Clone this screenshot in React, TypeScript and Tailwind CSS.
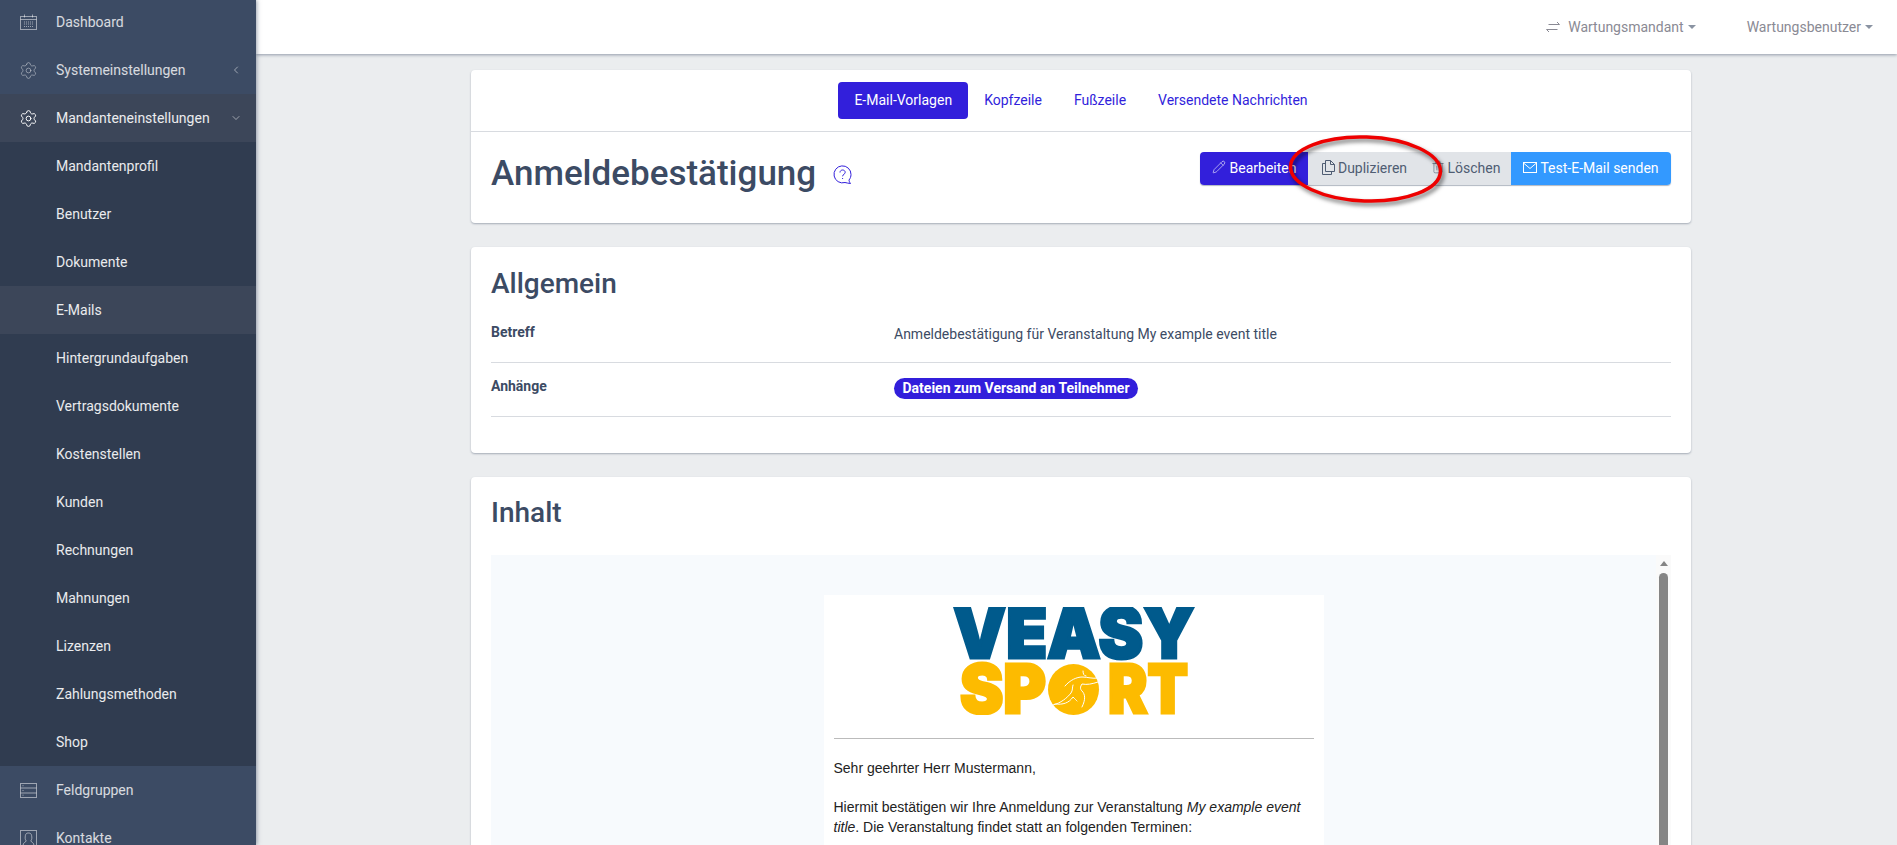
import { ChevronDown, ChevronLeft, Pencil, Settings, Trash2 } from 'lucide-react';

const subItems = [
  'Mandantenprofil',
  'Benutzer',
  'Dokumente',
  'E-Mails',
  'Hintergrundaufgaben',
  'Vertragsdokumente',
  'Kostenstellen',
  'Kunden',
  'Rechnungen',
  'Mahnungen',
  'Lizenzen',
  'Zahlungsmethoden',
  'Shop',
];

function CalendarIcon() {
  return (
    <svg width="17" height="16" viewBox="0 0 17 16" fill="none" stroke="currentColor" strokeWidth="1">
      <rect x="0.5" y="2.5" width="16" height="13" />
      <path d="M0.5 5.5h16M4.5 0.5v3M12.5 0.5v3" />
      <path d="M4 8h9M4 10h9M4 12.5h9" strokeDasharray="1 1" />
    </svg>
  );
}

function RowsIcon() {
  return (
    <svg width="17" height="15" viewBox="0 0 17 15" fill="none" stroke="currentColor" strokeWidth="1">
      <rect x="0.5" y="0.5" width="16" height="14" />
      <path d="M0.5 5h16M0.5 10h16M2.5 2.7h1M2.5 7.5h1M2.5 12.2h1" />
    </svg>
  );
}

function ContactIcon() {
  return (
    <svg width="17" height="16" viewBox="0 0 17 16" fill="none" stroke="currentColor" strokeWidth="1">
      <rect x="0.5" y="0.5" width="16" height="15" />
      <path d="M3 15.5c0-3 2.8-3.2 3.2-4.600C5 9.500 5 7.500 5.400 5.500 5.800 3.500 7 3 8.500 3s2.700.5 3.100 2.500c.4 2 .4 4-.8 5.400.4 1.400 3.200 1.600 3.200 4.600" />
    </svg>
  );
}

function SwapIcon() {
  return (
    <svg width="14" height="12" viewBox="0 0 14 12" fill="none" stroke="currentColor" strokeWidth="1">
      <path d="M0.5 8.500h11M0.5 8.500l2.500 2.500M13.500 3.500h-11M13.500 3.500L11 1" />
    </svg>
  );
}

function CopyIcon() {
  return (
    <svg width="13" height="15" viewBox="0 0 13 15" fill="none" stroke="currentColor" strokeWidth="1" className="-mt-[3px]">
      <path d="M3.500 0.500h5l4 4v7h-9zM8.500 0.500v4h4M3.500 3.500h-3v11h9v-3" />
    </svg>
  );
}

function MailIcon() {
  return (
    <svg width="14" height="11" viewBox="0 0 14 11" fill="none" stroke="currentColor" strokeWidth="1" className="-mt-[3px]">
      <rect x="0.5" y="0.5" width="13" height="10" />
      <path d="M0.5 1l6.500 5.500L13.500 1" />
    </svg>
  );
}

function HelpBubbleIcon() {
  return (
    <svg width="20" height="19" viewBox="0 0 20 19" fill="none" stroke="#321fdb" strokeWidth="1">
      <path d="M18 9.500a8.500 8.500 0 1 0-6 8c1.500.2 3.500 1 5.500 1-.8-1-1.500-2.500-1.500-3.500 1.300-1.500 2-3.500 2-5.500z" />
      <path d="M7 7.500c0-1.500 1.200-2.500 2.600-2.500s2.600 1 2.600 2.300c0 2-2.600 2-2.600 4M9.600 13v1" />
    </svg>
  );
}

function VeasyLogo() {
  return (
    <svg width="244" height="108" viewBox="0 0 244 108" className="mx-auto block">
      <g fontFamily="Inter, 'Liberation Sans', sans-serif" fontWeight="900" fontSize="70">
        <text x="1" y="51" textLength="242" lengthAdjust="spacingAndGlyphs" fill="#005a8c" stroke="#005a8c" strokeWidth="3">
          VEASY
        </text>
        <text x="8" y="106" fontSize="68" textLength="86" lengthAdjust="spacingAndGlyphs" fill="#fdbb00" stroke="#fdbb00" strokeWidth="3">
          SP
        </text>
        <text x="156" y="106" fontSize="68" textLength="80" lengthAdjust="spacingAndGlyphs" fill="#fdbb00" stroke="#fdbb00" strokeWidth="3">
          RT
        </text>
      </g>
      <circle cx="121.500" cy="82.500" r="25.500" fill="#fdbb00" />
      <g fill="none" stroke="#fff" strokeWidth="1" strokeLinecap="round">
        <path d="M131 64c0 3 1 5 3 5" />
        <path d="M113 79c5-6 12-9 17-9 6 0 10 2 16 1" />
        <path d="M146 75c-6 2-11 3-16 2-2 3-2 5 0 7 3 3 4 8 0 16" />
        <path d="M101 98c8-2 14-7 18-12 2-3 1-5 2-8" />
        <path d="M103 97c8 1 14-1 18-7 2 2 3 3 4 4" />
      </g>
    </svg>
  );
}

function SidebarRow({
  icon,
  label,
  chevron,
  className,
}: {
  icon?: React.ReactNode;
  label: string;
  chevron?: React.ReactNode;
  className: string;
}) {
  return (
    <div className={`flex h-[48px] shrink-0 items-center ${className}`}>
      <span className="flex w-[56px] justify-start pl-[20px]">{icon}</span>
      <span className="flex-1">{label}</span>
      {chevron && <span className="mr-[14px]">{chevron}</span>}
    </div>
  );
}

function Sidebar() {
  return (
    <aside className="z-10 flex h-[845px] w-[256px] shrink-0 flex-col overflow-hidden bg-[#3c4b64] text-[14px] shadow-[1px_0_4px_rgba(60,75,100,0.5)]">
      <div className="-mt-[2px] flex flex-col">
        <SidebarRow className="text-white/80" icon={<span className="text-white/50"><CalendarIcon /></span>} label="Dashboard" />
        <SidebarRow
          className="text-white/80"
          icon={<Settings size={19} strokeWidth={1} className="-ml-[1px] text-white/50" />}
          label="Systemeinstellungen"
          chevron={<ChevronLeft size={12} strokeWidth={2} className="text-white/50" />}
        />
        <SidebarRow
          className="bg-[#3c4659] text-white/90"
          icon={<Settings size={19} strokeWidth={1.200} className="-ml-[1px] text-white" />}
          label="Mandanteneinstellungen"
          chevron={<ChevronDown size={12} strokeWidth={2} className="text-white/50" />}
        />
        <div className="flex flex-col bg-[#303c50] text-white/90">
          {subItems.map((item) => (
            <SidebarRow key={item} className={item === 'E-Mails' ? 'bg-[#3c4659]' : ''} label={item} />
          ))}
        </div>
        <SidebarRow className="text-white/80" icon={<span className="text-white/50"><RowsIcon /></span>} label="Feldgruppen" />
        <SidebarRow className="text-white/80" icon={<span className="text-white/50"><ContactIcon /></span>} label="Kontakte" />
      </div>
    </aside>
  );
}

function Caret() {
  return <span className="ml-[4px] inline-block border-x-[4px] border-t-[4px] border-x-transparent border-t-[#8a93a2] align-[2px]" />;
}

function TopBar() {
  return (
    <header className="flex h-[54px] shrink-0 items-center justify-end bg-white pr-[24px] text-[14px] text-[#8a8a94] shadow-[0_1px_3px_rgba(60,75,100,0.5)]">
      <span className="flex items-center">
        <SwapIcon />
        <span className="ml-[8px]">Wartungsmandant</span>
        <Caret />
      </span>
      <span className="ml-[51px] flex items-center">
        Wartungsbenutzer
        <Caret />
      </span>
    </header>
  );
}

function DetailRow({ label, children }: { label: string; children: React.ReactNode }) {
  return (
    <div className="grid h-[54px] grid-cols-[403px_1fr] border-b border-[#d8dbe0] pt-[13px] text-[14px]">
      <div className="font-bold">{label}</div>
      <div className="pt-[2px]">{children}</div>
    </div>
  );
}

function Card({ children, className }: { children: React.ReactNode; className?: string }) {
  return <section className={`rounded-[4px] bg-white shadow-[0_1px_2px_rgba(60,75,100,0.4)] ${className ?? ''}`}>{children}</section>;
}

export default function App() {
  return (
    <div className="relative flex h-[845px] overflow-hidden bg-[#ebedef] font-['Roboto',sans-serif] text-[#3c4b64]">
      <Sidebar />
      <div className="flex min-w-0 flex-1 flex-col">
        <TopBar />
        <main className="flex w-[1435px] flex-col gap-[24px] pl-[215px] pt-[16px]">
          <Card>
            <nav className="flex h-[62px] items-center justify-center border-b border-[#d8dbe0] text-[14px] text-[#321fdb]">
              <a className="flex h-[37px] items-center rounded-[4px] bg-[#321fdb] px-[16px] text-white">E-Mail-Vorlagen</a>
              <a className="flex h-[37px] items-center px-[16px]">Kopfzeile</a>
              <a className="flex h-[37px] items-center px-[16px]">Fußzeile</a>
              <a className="flex h-[37px] items-center px-[16px]">Versendete Nachrichten</a>
            </nav>
            <div className="flex h-[91px] items-center justify-between px-[20px]">
              <div className="-mt-[8px] flex items-center">
                <h1 className="text-[35px] font-medium leading-none">Anmeldebestätigung</h1>
                <span className="ml-[17px] mt-[2px]"><HelpBubbleIcon /></span>
              </div>
              <div className="-mt-[18px] flex h-[33px] items-stretch rounded-[4px] text-[14px] shadow-[0_1px_1px_rgba(60,75,100,0.4)]">
                <button className="flex w-[108px] items-center justify-center gap-[4px] rounded-l-[4px] bg-[#321fdb] text-white">
                  <Pencil size={14} strokeWidth={1} className="-mt-[3px]" />
                  Bearbeiten
                </button>
                <button className="flex w-[115px] items-center justify-center gap-[3px] pr-[2px] bg-[#e1e4e8] text-[#4f5d73]">
                  <CopyIcon />
                  Duplizieren
                </button>
                <button className="flex w-[88px] items-center justify-center gap-[3px] pr-[3px] bg-[#e1e4e8] text-[#4f5d73]">
                  <Trash2 size={14} strokeWidth={1} className="-mt-[3px]" />
                  Löschen
                </button>
                <button className="flex w-[160px] items-center justify-center gap-[3px] rounded-r-[4px] bg-[#3399ff] text-white">
                  <MailIcon />
                  Test-E-Mail senden
                </button>
              </div>
            </div>
          </Card>

          <Card className="h-[206px] px-[20px] pt-[21px]">
            <h2 className="text-[28px] font-medium leading-[32px]">Allgemein</h2>
            <div className="mt-[9px] flex flex-col">
              <DetailRow label="Betreff">Anmeldebestätigung für Veranstaltung My example event title</DetailRow>
              <DetailRow label="Anhänge">
                <span className="inline-block h-[21px] rounded-full bg-[#321fdb] px-[8.500px] text-[14px] font-bold leading-[21px] text-white">
                  Dateien zum Versand an Teilnehmer
                </span>
              </DetailRow>
            </div>
          </Card>

          <Card className="h-[600px] px-[20px] pt-[20px]">
            <h2 className="text-[28px] font-medium leading-[32px]">Inhalt</h2>
            <div className="relative mt-[26px] flex h-[500px] justify-center bg-[#f7fafd] pr-[15px] pt-[40px]">
              <div className="w-[500px] bg-white px-[10px] pt-[12px] font-['Liberation_Sans',Arial,sans-serif] text-[14px] leading-[20px] text-[#222222]">
                <VeasyLogo />
                <hr className="mt-[23px] border-[#bbbbbb]" />
                <p className="mt-[19px]">Sehr geehrter Herr Mustermann,</p>
                <p className="mt-[19px]">
                  Hiermit bestätigen wir Ihre Anmeldung zur Veranstaltung <em>My example event title</em>. Die Veranstaltung findet statt an folgenden Terminen:
                </p>
              </div>
              <div className="absolute right-0 top-0 flex h-full w-[15px] flex-col items-center bg-[#fafafa] pt-[6px]">
                <span className="border-x-[4px] border-b-[5px] border-x-transparent border-b-[#858585]" />
                <span className="mt-[7px] h-full w-[9px] rounded-t-full bg-[#858585]" />
              </div>
            </div>
          </Card>
        </main>
      </div>
      {/* Red annotation ring drawn over the button group */}
      <svg className="absolute left-[1285px] top-[130px] drop-shadow-[2px_3px_2px_rgba(0,0,0,0.55)]" width="164" height="78" viewBox="0 0 164 78" fill="none">
        <ellipse cx="80.500" cy="39" rx="75" ry="32" stroke="#ee0000" strokeWidth="3.500" transform="rotate(2 80 39)" />
      </svg>
    </div>
  );
}
